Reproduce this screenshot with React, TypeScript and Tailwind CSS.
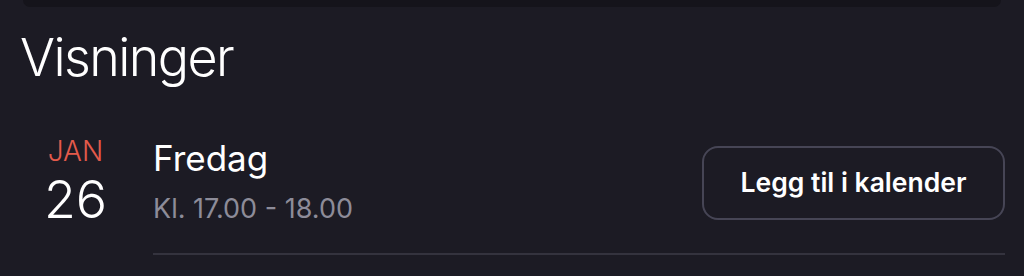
import React from "react";

const viewing = {
  month: "JAN",
  day: "26",
  weekday: "Fredag",
  time: "Kl. 17.00 - 18.00",
};

export default function App() {
  return (
    <main className="w-[1024px] h-[276px] overflow-hidden bg-[#1c1b24] font-['Inter',sans-serif]">
      {/* Bottom of the card above */}
      <div className="mx-[23px] h-[7px] rounded-b-[10px] bg-[#15141b]" />

      <h1 className="mt-[21px] pl-[20px] text-[52px] leading-[60px] font-light tracking-[-1.6px] text-white">
        Visninger
      </h1>

      <div className="mt-[48px] flex items-start">
        {/* Date */}
        <div className="w-[153px] flex flex-col items-center pr-[2px]">
          <span className="mt-[1px] text-[28px] leading-[28px] font-light text-[#e45a4b]">{viewing.month}</span>
          <span className="mt-[9px] text-[52px] leading-[52px] font-light text-white">{viewing.day}</span>
        </div>

        {/* Details */}
        <div className="flex-1 pr-[19px]">
          <div className="flex items-start justify-between">
            <div className="flex flex-col">
              <span className="mt-[1px] text-[35px] leading-[42px] text-white">{viewing.weekday}</span>
              <span className="mt-[12px] text-[27px] leading-[36px] text-[#8d8c99]">{viewing.time}</span>
            </div>
            <button className="mt-[10px] w-[303px] h-[74px] rounded-[16px] border-2 border-[#464555] text-[26.5px] font-semibold text-white">
              Legg til i kalender
            </button>
          </div>
          <div className="mt-[26px] h-[2px] bg-[#34333e]" />
        </div>
      </div>
    </main>
  );
}
